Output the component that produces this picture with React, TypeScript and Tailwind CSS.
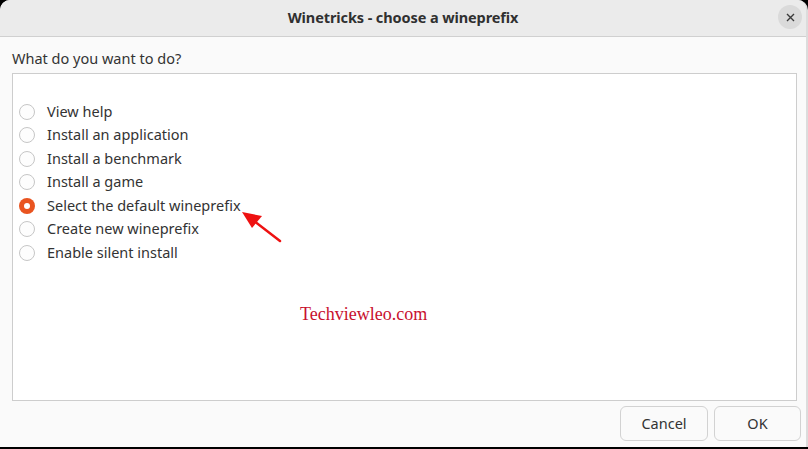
import React from "react"

const OPTIONS = [
  "View help",
  "Install an application",
  "Install a benchmark",
  "Install a game",
  "Select the default wineprefix",
  "Create new wineprefix",
  "Enable silent install",
]

function Radio({ checked }: { checked: boolean }) {
  if (checked) {
    return (
      <span className="w-4 h-4 rounded-full bg-[#e95420] grid place-items-center shrink-0">
        <span className="w-[6px] h-[6px] rounded-full bg-white" />
      </span>
    )
  }
  return (
    <span className="w-4 h-4 rounded-full border border-[#c6c6c6] bg-[#fdfdfd] shrink-0" />
  )
}

export default function App() {
  return (
    <div
      className="w-[808px] h-[449px] bg-black overflow-hidden"
      style={{ fontFamily: '"Noto Sans", "Liberation Sans", sans-serif' }}
    >
      <div className="relative h-[447px] w-[808px] rounded-t-[10px] bg-[#fafafa] flex flex-col overflow-hidden border-r-2 border-[#dcdcdc]">
        {/* Titlebar */}
        <header className="h-[37px] shrink-0 bg-[#ebebeb] border-b border-[#d0d0d0] flex items-center justify-center relative">
          <h1 className="text-[14.5px] font-bold text-[#303030] tracking-[-0.1px]">
            Winetricks - choose a wineprefix
          </h1>
          <button
            type="button"
            aria-label="Close"
            className="absolute right-[4px] top-[5px] w-6 h-6 rounded-full bg-[#dadada] grid place-items-center"
          >
            <svg width="9" height="9" viewBox="0 0 9 9" fill="none">
              <path d="M1 1L8 8M8 1L1 8" stroke="#3a3a3a" strokeWidth="1.4" />
            </svg>
          </button>
        </header>

        {/* Body */}
        <main className="flex-1 flex flex-col pl-3 pr-[9px] pt-[12px] pb-[6px] min-h-0">
          <div className="text-[14.5px] text-[#333] leading-[18px]">What do you want to do?</div>
          <div className="mt-[6px] h-[328px] bg-white border border-[#cdcdcd] pt-[26px] pl-[6px]">
            <ul className="flex flex-col">
              {OPTIONS.map((o, i) => (
                <li key={o} className="h-[23.5px] flex items-center gap-[12px]">
                  <Radio checked={i === 4} />
                  <span className="text-[14.5px] text-[#333]">{o}</span>
                </li>
              ))}
            </ul>
          </div>

          <div className="mt-auto flex justify-end gap-[6px] -mr-[4px]">
            <button
              type="button"
              className="w-[88px] h-[35px] rounded-[6px] border border-[#d2d2d2] bg-[#fafafa] text-[14.5px] text-[#333]"
            >
              Cancel
            </button>
            <button
              type="button"
              className="w-[87px] h-[35px] rounded-[6px] border border-[#d2d2d2] bg-[#fafafa] text-[14.5px] text-[#333]"
            >
              OK
            </button>
          </div>
        </main>

        {/* Watermark */}
        <div
          className="absolute left-[300px] top-[301px] text-[18px] text-[#c8102e]"
          style={{ fontFamily: '"Liberation Serif", serif' }}
        >
          Techviewleo.com
        </div>

        {/* Annotation arrow */}
        <svg
          className="absolute left-0 top-0 pointer-events-none"
          width="808"
          height="447"
          viewBox="0 0 808 447"
        >
          <line x1="280" y1="241" x2="254" y2="221" stroke="#ee1111" strokeWidth="2.5" strokeLinecap="round" />
          <polygon points="242,212 262,216 252,228" fill="#ee1111" />
        </svg>
      </div>
    </div>
  )
}
